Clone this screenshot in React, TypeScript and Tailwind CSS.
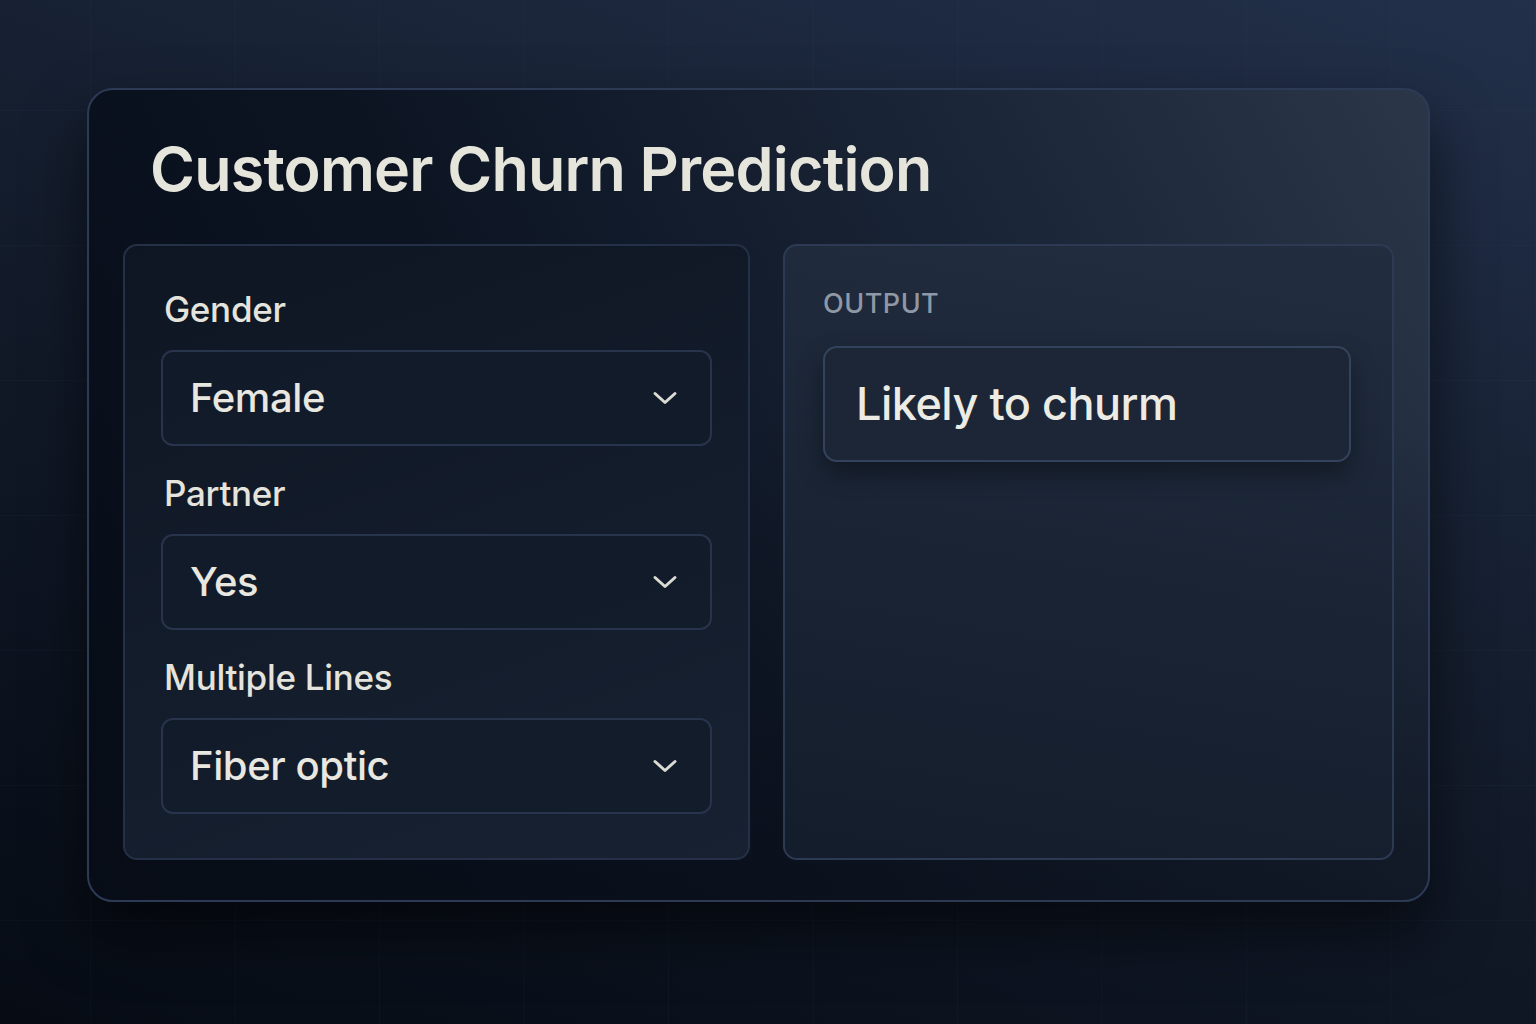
import React from 'react';

const fields = [
  { label: 'Gender', value: 'Female' },
  { label: 'Partner', value: 'Yes' },
  { label: 'Multiple Lines', value: 'Fiber optic' },
];

function Chevron() {
  return (
    <svg width="26" height="16" viewBox="0 0 26 16" fill="none" className="text-[#dcdcd4]">
      <path d="M3 3.5 13 12.5 23 3.5" stroke="currentColor" strokeWidth="3" strokeLinecap="round" strokeLinejoin="round" />
    </svg>
  );
}

function SelectField({ label, value }: { label: string; value: string }) {
  return (
    <div className="flex flex-col">
      <div className="text-[35px] leading-[44px] font-medium text-[#e4e3dc] pl-[3px] tracking-[-0.3px]">{label}</div>
      <div className="mt-[19px] h-[96px] rounded-[12px] border-2 border-[#27344b] bg-[#121b2a]/80 flex items-center justify-between pl-[27px] pr-[32px]">
        <span className="text-[40px] font-medium text-[#e8e7e0] tracking-[-0.4px]">{value}</span>
        <Chevron />
      </div>
    </div>
  );
}

export default function App() {
  return (
    <div
      className="w-[1536px] h-[1024px] relative overflow-hidden bg-[linear-gradient(200deg,#22304a_0%,#141d2d_45%,#060b14_100%)]"
      style={{ fontFamily: 'Inter, "Noto Sans", sans-serif' }}
    >
      {/* faint grid */}
      <div className="absolute inset-0 opacity-50 bg-[linear-gradient(to_right,rgba(80,100,130,0.12)_1px,transparent_1px),linear-gradient(to_bottom,rgba(80,100,130,0.12)_1px,transparent_1px)] bg-[size:144.5px_135px] bg-[position:90px_110px]" />

      <div className="relative pt-[88px] pl-[87px]">
        <div className="w-[1343px] h-[814px] rounded-[26px] border-2 border-[#2c3a55] bg-[linear-gradient(to_bottom,transparent_40%,rgba(8,13,22,0.55)_100%),linear-gradient(62deg,#060c16_0%,#0c1422_38%,#1a2537_72%,#2b3649_100%)] shadow-[0_30px_60px_rgba(0,0,0,0.55)] flex flex-col px-[34px]">
          <h1 className="mt-[39px] pl-[27px] text-[61px] leading-[80px] font-semibold text-[#e6e5dc] tracking-[-0.8px]">
            Customer Churn Prediction
          </h1>

          <div className="mt-[35px] flex gap-[33px]">
            <div className="w-[627px] h-[616px] rounded-[14px] border-2 border-[#243047] bg-[linear-gradient(160deg,#0e1623_0%,#141d2c_60%,#172131_100%)] px-[36px] pt-[41px] flex flex-col gap-[25px]">
              {fields.map((f) => (
                <SelectField key={f.label} label={f.label} value={f.value} />
              ))}
            </div>

            <div className="w-[611px] h-[616px] rounded-[14px] border-2 border-[#2c3a53] bg-[linear-gradient(190deg,#222d3f_0%,#1a2435_50%,#141d2b_100%)] px-[38px] pt-[42px]">
              <div className="text-[27px] leading-[32px] font-medium text-[#8f98a5] tracking-[0.5px]">OUTPUT</div>
              <div className="mt-[26px] h-[116px] w-[528px] rounded-[14px] border-2 border-[#34435c] bg-[#1c2637] shadow-[0_12px_24px_rgba(0,0,0,0.35)] flex items-center pl-[31px]">
                <span className="text-[45px] font-medium text-[#ecebe4] tracking-[-0.5px]">Likely to churm</span>
              </div>
            </div>
          </div>
        </div>
      </div>
    </div>
  );
}
